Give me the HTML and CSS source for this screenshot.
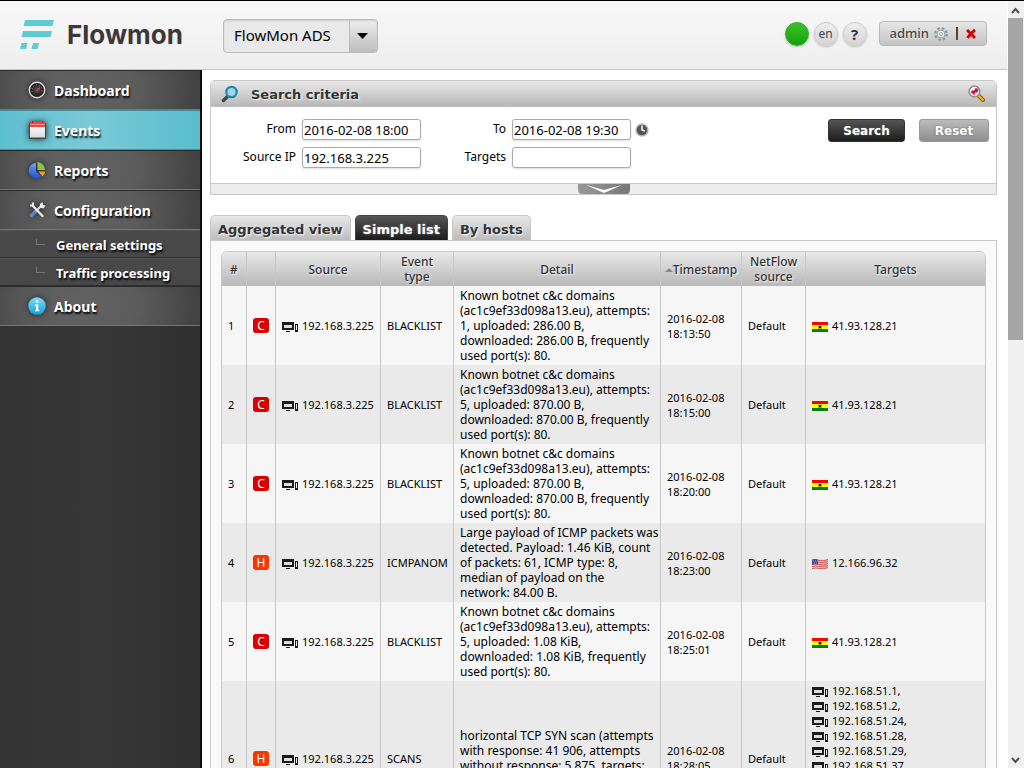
FILE: index.html
```html
<!DOCTYPE html>
<html lang="en">
<head>
<meta charset="utf-8">
<title>Flowmon ADS - Events</title>
<link rel="stylesheet" href="styles.css">
</head>
<body>
<svg class="defs" aria-hidden="true">
  <defs>
    <radialGradient id="dial"><stop offset="0" stop-color="#555"/><stop offset="1" stop-color="#111"/></radialGradient>
    <linearGradient id="paper" x2="0" y2="1"><stop offset="0" stop-color="#fff"/><stop offset="1" stop-color="#ddd"/></linearGradient>
    <linearGradient id="pie" x2="0" y2="1"><stop offset="0" stop-color="#6f9df0"/><stop offset="1" stop-color="#1d55c8"/></linearGradient>
    <linearGradient id="info" x2="0" y2="1"><stop offset="0" stop-color="#7fdcfb"/><stop offset="1" stop-color="#0ea2dc"/></linearGradient>
  </defs>
  <symbol id="host" viewBox="0 0 16 11">
    <path fill="#1c1c1c" fill-rule="evenodd" d="M0 1h12v8H0zM2 4v3h8V4zM4 10h4v1H4zM13 3h3v8h-3zM14 4v5h1V4z"/>
    <path fill="#ddd" d="M2 4h8v3H2z"/>
  </symbol>
  <symbol id="ghana" viewBox="0 0 16 11">
    <path fill="#f00" d="M0 1h16v3H0z"/><path fill="#ff0" d="M0 4h16v4H0z"/><path fill="#008000" d="M0 8h16v3H0z"/>
    <path d="M8 4l.6 1.500h1.700L9 6.400l.6 1.500L8 7l-1.600.9L7 6.400 5.700 5.500h1.700z"/>
  </symbol>
  <symbol id="usa" viewBox="0 0 16 11">
    <path fill="#eebcbc" d="M0 1.500q4-1 8 0t8-1v9.500q-4 1-8 0t-8 1z"/>
    <path fill="none" stroke="#d05a5a" d="M0 2.500q4-1 8 0t8-1M0 4.500q4-1 8 0t8-1M0 6.500q4-1 8 0t8-1M0 8.500q4-1 8 0t8-1M0 10.500q4-1 8 0t8-1"/>
    <path fill="#3b4fa0" d="M0 1.500q3-1 6 0v5q-3-1-6 0z"/>
    <path stroke="#8896cc" stroke-dasharray="1 1" d="M1 3h5M2 5h3"/>
  </symbol>
</svg>

<div class="app">
  <div class="page">
    <header class="topbar">
      <a class="brand" href="#">
        <svg width="34" height="30" viewBox="0 0 34 30" aria-hidden="true"><path fill="#5fcbd3" d="M5 0h29l-1.500 6h-29zM3 11h29l-1.500 6h-29zM1.500 23h6l-1.500 6H0zM13 23h6l-1.500 6h-6z"/></svg>
        <span>Flowmon</span>
      </a>
      <div class="picker">
        <select aria-label="Module"><option>FlowMon ADS</option></select>
        <svg class="picker-arrow" width="12" height="6" viewBox="0 0 12 6" aria-hidden="true"><path d="M0 0h11L5.500 6z"/></svg>
      </div>
      <div class="tools">
        <button class="round status" aria-label="Status"></button>
        <button class="round">en</button>
        <button class="round help">?</button>
        <div class="user">
          <a href="#">admin</a>
          <svg width="14" height="14" viewBox="0 0 14 14" aria-hidden="true"><circle cx="7" cy="7" r="5.800" fill="none" stroke="#87999b" stroke-width="2.200" stroke-dasharray="2.600 1.955"/><circle cx="7" cy="7" r="4" fill="#e4eced" stroke="#91a3a5"/><circle cx="7" cy="7" r="1.500" fill="#fff" stroke="#91a3a5"/></svg>
          <span class="bar"></span>
          <a href="#" aria-label="Log out"><svg width="10" height="10" viewBox="0 0 10 10"><path fill="none" stroke="#d90000" stroke-width="3" d="M1 1q3 3 8 8M9 1Q5 4 1.500 9"/></svg></a>
        </div>
      </div>
    </header>

    <div class="body">
      <nav class="sidebar">
        <a class="item" href="#"><svg class="ico" viewBox="0 0 18 18"><circle cx="9" cy="9" r="7.700" fill="url(#dial)" stroke="#ddd" stroke-width="1.400"/><path fill="none" stroke="#999" stroke-dasharray="1 2" d="M4.500 11a5 5 0 1 1 9 0"/><path stroke="#e33" stroke-width="1.600" d="M8.500 10L12 6.500"/></svg>Dashboard</a>
        <a class="item active" href="#"><svg class="ico" viewBox="0 0 18 18"><path fill="#444" d="M1 2h17v16H1z"/><path fill="url(#paper)" d="M2 3h15v13.500H2z"/><path fill="#e8483f" d="M2 1h15v5H2z"/><path stroke="#a22" d="M4.500 0v2M14.500 0v2"/><path fill="#f58c84" d="M2 3h15v1H2z"/></svg>Events</a>
        <a class="item" href="#"><svg class="ico" viewBox="0 0 18 18"><path fill="url(#pie)" d="M8 2v8l5.500 5.500A7.700 7.700 0 1 1 8 2z"/><path fill="#8cc63f" d="M9.500 1a8 8 0 0 1 7.500 8l-7.500 0z"/><path fill="#f9a11b" d="M10.500 10.500h6.500a7 7 0 0 1-2.500 5z"/></svg>Reports</a>
        <a class="item" href="#"><svg class="ico" viewBox="0 0 18 18"><path stroke="#5f87c8" stroke-width="3.400" stroke-linecap="round" d="M3.500 14.500l4-4"/><path stroke="#ddd" stroke-width="2" d="M8 10l6-6"/><path fill="#eee" d="M12 3l2.500-2 .5 3 2.500.5-2 3-3.500-1z"/><path stroke="#e8e8e8" stroke-width="2.400" stroke-linecap="round" d="M4.500 4.500L14.500 15"/><path fill="none" stroke="#e8e8e8" stroke-width="2" d="M2 4.500h3V1.500"/></svg>Configuration</a>
        <a class="subitem" href="#"><span class="branch"></span>General settings</a>
        <a class="subitem" href="#"><span class="branch"></span>Traffic processing</a>
        <a class="item" href="#"><svg class="ico" viewBox="0 0 18 18"><circle cx="9" cy="9" r="8.700" fill="url(#info)"/><path fill="#fff" d="M8 3.500h2.300v2.200H8zM7 7.500h3.300V13h1v1.200H7V13h1V8.700H7z"/></svg>About</a>
      </nav>

      <main class="content">
        <section class="criteria">
          <div class="criteria-head">
            <svg width="18" height="18" viewBox="0 0 18 18" aria-hidden="true"><path stroke="#444" stroke-width="3.400" stroke-linecap="round" d="M2.500 15.500L6 12"/><circle cx="10.500" cy="7" r="5.200" fill="#9fd4e4" stroke="#1f86ab" stroke-width="2.200"/></svg>
            <h2>Search criteria</h2>
            <svg class="clear" width="17" height="17" viewBox="0 0 17 17" aria-hidden="true"><path stroke="#8a5a10" stroke-width="4" stroke-linecap="round" d="M11 11l4 4"/><path stroke="#f5b72e" stroke-width="2" stroke-linecap="round" d="M11 11l4 4"/><circle cx="6.500" cy="6.500" r="5.400" fill="#f3f7fb" stroke="#8c8c96" stroke-width="1.500"/><path fill="#d8122c" d="M2.500 7L5 5l1 1 1.500-3L10.500 4 9.500 7.500 7 7.500 6.500 10.500 4.500 8.500z"/></svg>
          </div>
          <form class="criteria-form">
            <div class="fields">
              <label for="from">From</label><input id="from" type="text" value="2016-02-08 18:00">
              <label for="to">To</label><input id="to" type="text" value="2016-02-08 19:30">
              <svg class="clock" width="14" height="14" viewBox="0 0 14 14" aria-hidden="true"><circle cx="7" cy="7" r="6" fill="#555" stroke="#bbb" stroke-width="1.500"/><path fill="none" stroke="#fff" stroke-width="1.500" d="M7 2.500V7l3 1"/></svg>
              <label for="source">Source IP</label><input id="source" type="text" value="192.168.3.225">
              <label for="targets">Targets</label><input id="targets" type="text">
            </div>
            <div class="actions">
              <button type="button" class="btn dark">Search</button>
              <button type="button" class="btn">Reset</button>
            </div>
          </form>
          <div class="criteria-foot"><button class="expand" aria-label="More criteria"><svg width="36" height="8" viewBox="0 0 36 8"><path fill="#fff" d="M0 0l18 5L36 0 18 8z"/></svg></button></div>
        </section>

        <div class="tabs">
          <button class="tab">Aggregated view</button>
          <button class="tab on">Simple list</button>
          <button class="tab">By hosts</button>
        </div>
        <section class="panel">
          <table class="events">
            <colgroup><col class="c-num"><col class="c-pri"><col class="c-src"><col class="c-type"><col class="c-detail"><col class="c-time"><col class="c-flow"><col></colgroup>
            <thead>
              <tr><th>#</th><th></th><th>Source</th><th>Event<br>type</th><th>Detail</th><th class="sorted"><span class="asc"></span>Timestamp</th><th>NetFlow<br>source</th><th>Targets</th></tr>
            </thead>
            <tbody>
              <tr><td>1</td><td><span class="pri critical">C</span></td><td><svg class="mark"><use href="#host"/></svg>192.168.3.225</td><td>BLACKLIST</td><td class="detail">Known botnet c&amp;c domains<br>(ac1c9ef33d098a13.eu), attempts:<br>1, uploaded: 286.00 B,<br>downloaded: 286.00 B, frequently<br>used port(s): 80.</td><td>2016-02-08<br>18:13:50</td><td>Default</td><td><svg class="mark"><use href="#ghana"/></svg>41.93.128.21</td></tr>
              <tr><td>2</td><td><span class="pri critical">C</span></td><td><svg class="mark"><use href="#host"/></svg>192.168.3.225</td><td>BLACKLIST</td><td class="detail">Known botnet c&amp;c domains<br>(ac1c9ef33d098a13.eu), attempts:<br>5, uploaded: 870.00 B,<br>downloaded: 870.00 B, frequently<br>used port(s): 80.</td><td>2016-02-08<br>18:15:00</td><td>Default</td><td><svg class="mark"><use href="#ghana"/></svg>41.93.128.21</td></tr>
              <tr><td>3</td><td><span class="pri critical">C</span></td><td><svg class="mark"><use href="#host"/></svg>192.168.3.225</td><td>BLACKLIST</td><td class="detail">Known botnet c&amp;c domains<br>(ac1c9ef33d098a13.eu), attempts:<br>5, uploaded: 870.00 B,<br>downloaded: 870.00 B, frequently<br>used port(s): 80.</td><td>2016-02-08<br>18:20:00</td><td>Default</td><td><svg class="mark"><use href="#ghana"/></svg>41.93.128.21</td></tr>
              <tr><td>4</td><td><span class="pri high">H</span></td><td><svg class="mark"><use href="#host"/></svg>192.168.3.225</td><td>ICMPANOM</td><td class="detail">Large payload of ICMP packets was<br>detected. Payload: 1.46 KiB, count<br>of packets: 61, ICMP type: 8,<br>median of payload on the<br>network: 84.00 B.</td><td>2016-02-08<br>18:23:00</td><td>Default</td><td><svg class="mark"><use href="#usa"/></svg>12.166.96.32</td></tr>
              <tr><td>5</td><td><span class="pri critical">C</span></td><td><svg class="mark"><use href="#host"/></svg>192.168.3.225</td><td>BLACKLIST</td><td class="detail">Known botnet c&amp;c domains<br>(ac1c9ef33d098a13.eu), attempts:<br>5, uploaded: 1.08 KiB,<br>downloaded: 1.08 KiB, frequently<br>used port(s): 80.</td><td>2016-02-08<br>18:25:01</td><td>Default</td><td><svg class="mark"><use href="#ghana"/></svg>41.93.128.21</td></tr>
              <tr class="tall"><td>6</td><td><span class="pri high">H</span></td><td><svg class="mark"><use href="#host"/></svg>192.168.3.225</td><td>SCANS</td><td class="detail">horizontal TCP SYN scan (attempts<br>with response: 41 906, attempts<br>without response: 5 875, targets:<br>&nbsp;</td><td>2016-02-08<br>18:28:05</td><td>Default</td><td class="list"><svg class="mark"><use href="#host"/></svg>192.168.51.1,<br><svg class="mark"><use href="#host"/></svg>192.168.51.2,<br><svg class="mark"><use href="#host"/></svg>192.168.51.24,<br><svg class="mark"><use href="#host"/></svg>192.168.51.28,<br><svg class="mark"><use href="#host"/></svg>192.168.51.29,<br><svg class="mark"><use href="#host"/></svg>192.168.51.37</td></tr>
            </tbody>
          </table>
        </section>
      </main>
    </div>
  </div>
  <div class="scroll" aria-hidden="true">
    <svg width="16" height="17" viewBox="0 0 16 17"><path fill="none" stroke="#505050" stroke-width="2" d="M4 12l3.500-4L11 12"/></svg>
    <div class="thumb"></div>
    <svg class="down" width="16" height="17" viewBox="0 0 16 17"><path fill="none" stroke="#505050" stroke-width="2" d="M4 7l3.500 4L11 7"/></svg>
  </div>
</div>
</body>
</html>
```
FILE: styles.css
```css
* { box-sizing: border-box; }
body { margin: 0; background: #fff; color: #000; font: 11px/15px "Noto Sans", sans-serif; }
a { color: inherit; text-decoration: none; }
button, input, select { font: inherit; color: inherit; margin: 0; }
svg { flex: none; }
.defs { position: absolute; width: 0; height: 0; }

.app { display: flex; height: 100vh; overflow: hidden; border-top: 1px solid #000; }
.page { flex: 1; min-width: 0; display: flex; flex-direction: column; }

.topbar { display: flex; align-items: flex-start; height: 69px; flex: none; padding: 18px 20px 0; margin-right: 1px; border-bottom: 1px solid #c8c8c8; background: linear-gradient(#f8f8f8, #eee); }
.brand { display: flex; gap: 13px; width: 203px; color: #3d3739; font: 700 26px/32px Inter, sans-serif; }
.brand svg { margin-top: 1px; }
.picker { position: relative; width: 155px; }
.picker select { appearance: none; width: 100%; height: 34px; padding: 0 10px 2px; border: 1px solid #bbb; border-radius: 4px; font-size: 15px; box-shadow: inset 0 1px 2px #ccc; background: linear-gradient(#bbb, #bbb) right 27px top / 1px 100% no-repeat, linear-gradient(#ededed, #bdbdbd) right / 27px 100% no-repeat, #e9e9e9; }
.picker-arrow { position: absolute; right: 9px; top: 14px; pointer-events: none; }
.tools { display: flex; gap: 5px; margin-left: auto; padding-top: 2px; }
.round { width: 24px; height: 24px; margin-top: 1px; padding: 0; border: 1px solid #ccc; border-radius: 50%; background: linear-gradient(#eee, #d4d4d4); color: #444; font-size: 12px; line-height: 20px; box-shadow: 0 1px 2px #bbb; }
.status { background: linear-gradient(#3cc228, #14a00c); border-color: #2fae20; }
.help { font: 700 15px/20px "Noto Sans", sans-serif; color: #333; }
.user { display: flex; align-items: center; gap: 5px; height: 25px; margin-left: 7px; padding: 0 10px; border: 1px solid #b9b9b9; border-radius: 4px; background: linear-gradient(#e6e6e6, #c4c4c4); color: #444; font-size: 13px; font-weight: 500; text-shadow: 0 1px 1px #fff; }
.user .bar { width: 2px; height: 13px; margin: 0 3px; background: #543; }
.user a { display: flex; }

.body { flex: 1; min-height: 0; display: flex; }
.sidebar { width: 202px; flex: none; border-right: 2px solid #0c0c0c; background: linear-gradient(90deg, #333, #373737 50%, #303030); color: #fff; text-shadow: 1px 2px 2px #000; font-weight: 700; }
.item { display: flex; align-items: center; height: 40px; gap: 8px; padding-left: 28px; font-size: 14px; border-bottom: 1px solid #757575; border-top: 1px solid #2c2c2c; background: radial-gradient(ellipse 130px 90px at 85px 50%, #636363, #5c5c5c 40%, #3c3c3c); }
.ico { width: 18px; height: 18px; filter: drop-shadow(0 0 3px #222); }
.active { border-color: #4b8b95; background: linear-gradient(90deg, #5cbfcf, #7acad8 45%, #59bdcd); }
.subitem { display: flex; height: 28px; align-items: center; gap: 11px; padding: 2px 0 0 36px; font-size: 13px; background: #484848; border-bottom: 1px solid #2e2e2e; border-top: 1px solid #525252; }
.branch { width: 9px; height: 6px; margin-bottom: 6px; border-left: 1px solid #777; border-bottom: 1px solid #777; }

.content { flex: 1; min-width: 0; padding: 10px 11px 0 8px; }
.criteria { border: 1px solid #c8c8c8; border-radius: 5px 5px 0 0; }
.criteria-head { display: flex; align-items: center; gap: 12px; height: 26px; padding: 0 11px 0 10px; border-bottom: 1px solid #c0c0c0; border-radius: 4px 4px 0 0; background: linear-gradient(#e8e8e8, #b8b8b8); }
.criteria-head h2 { margin: 0; padding-top: 2px; font: 700 13px/18px "DejaVu Sans", sans-serif; color: #333; text-shadow: 1px 1px 2px #fff; }
.clear { margin-left: auto; }
.criteria-form { display: flex; justify-content: space-between; padding: 12px 7px 15px 0; }
.fields { display: grid; grid-template-columns: 85px 119px 79px 119px 14px; grid-template-rows: 21px 21px; gap: 7px 6px; font-size: 12px; }
.fields label { text-align: right; line-height: 19px; }
.fields input { width: 100%; height: 21px; padding: 1px; border: 1px solid #aaa; border-radius: 3px; background: #fff; font-size: 13px; box-shadow: 0 1px 2px #ddd; }
.clock { align-self: center; margin-left: -2px; }
.actions { display: flex; align-items: flex-start; gap: 14px; }
.btn { width: 70px; height: 23px; padding: 1px 0 0; border: 1px solid #999; border-radius: 3px; background: linear-gradient(#bbb, #8e8e8e); color: #fff; font: 700 12px/20px "DejaVu Sans", sans-serif; text-shadow: 0 0 2px #666; }
.btn.dark { width: 77px; border-color: #333; background: linear-gradient(#555, #1c1c1c); }
.criteria-foot { display: flex; justify-content: center; height: 11px; border-top: 1px solid #c8c8c8; background: #ededed; }
.expand { width: 52px; height: 10px; padding: 0; border: 0; border-radius: 0 0 4px 4px; background: linear-gradient(90deg, #999, #777); display: flex; justify-content: center; align-items: center; }

.tabs { display: flex; gap: 4px; margin-top: 20px; }
.tab { height: 25px; padding: 3px 7px 0; border: 1px solid #c8c8c8; border-bottom: 0; border-radius: 5px 5px 0 0; background: linear-gradient(#e8e8e8, #bcbcbc); color: #333; font: 700 13px/20px "DejaVu Sans", sans-serif; text-shadow: 1px 1px 2px #fff; }
.tab.on { border-color: #444; background: linear-gradient(#555, #1c1c1c); color: #fff; text-shadow: 0 0 2px #888; }
.panel { padding: 10px; border: 1px solid #c8c8c8; background: #f9f9f9; }
.events { width: 100%; table-layout: fixed; border-collapse: separate; border-spacing: 0; border: 1px solid #c8c8c8; border-radius: 6px 6px 0 0; overflow: hidden; }
.c-num { width: 25px; }
.c-pri { width: 29px; }
.c-src { width: 105px; }
.c-type { width: 73px; }
.c-detail { width: 207px; }
.c-time { width: 81px; }
.c-flow { width: 64px; }
.events th { height: 34px; padding: 2px 0; font-size: 12px; font-weight: 500; color: #333; text-shadow: 1px 1px 2px #fff; background: linear-gradient(#e8e8e8, #b8b8b8); }
.events th, .events td { border-right: 1px solid #c8c8c8; }
.events th:last-child, .events td:last-child { border-right: 0; }
.events td { padding: 2px 0 2px 6px; white-space: nowrap; background: #f6f6f6; }
.events .detail { font-size: 12px; }
.events tr:nth-child(even) td { background: #eaeaea; }
.tall { height: 154px; }
.list { vertical-align: top; }
.asc { display: inline-block; vertical-align: middle; border: 4px solid transparent; border-top: 0; border-bottom-color: #888; }
.pri { display: block; width: 16px; height: 15px; border-radius: 3px; color: #fff; font-size: 12px; text-align: center; }
.critical { background: #d90000; }
.high { background: #ff3300; }
.mark { width: 16px; height: 11px; margin-right: 4px; vertical-align: -2px; }

.scroll { width: 16px; flex: none; display: flex; flex-direction: column; background: #f0f0f0; }
.thumb { height: 42%; margin-right: 1px; background: #a6a6a6; }
.down { margin-top: auto; }
```
